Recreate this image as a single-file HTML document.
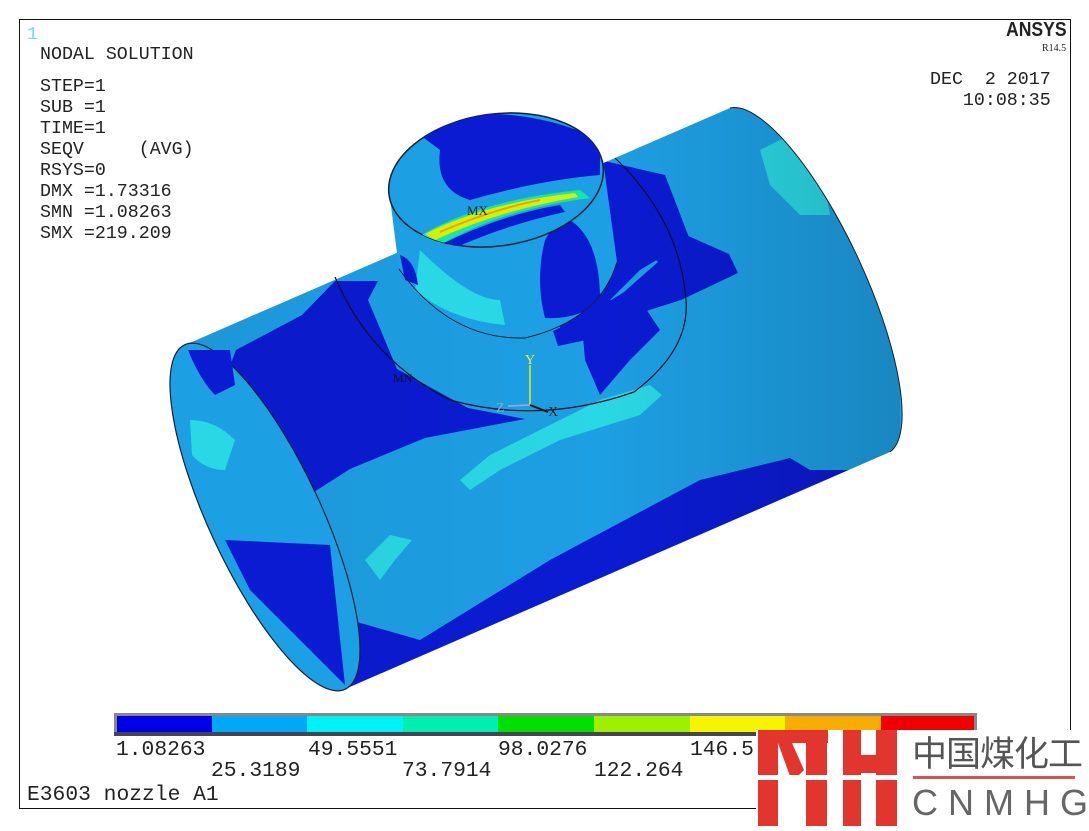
<!DOCTYPE html>
<html><head><meta charset="utf-8"><style>
html,body{margin:0;padding:0;background:#fff;}
body{width:1089px;height:831px;position:relative;overflow:hidden;font-family:"Liberation Mono",monospace;}
.frame{position:absolute;left:19px;top:19px;width:1052px;height:790px;border:1px solid #111;box-sizing:border-box;}
.t{position:absolute;font-size:18.3px;color:#222;white-space:pre;line-height:21px;}
.b{font-size:21.3px;}
</style></head><body>
<div class="frame"></div>
<svg width="1089" height="831" style="position:absolute;left:0;top:0">
<defs>
<linearGradient id="sh" x1="0" y1="0" x2="1" y2="0">
<stop offset="0" stop-color="#000" stop-opacity="0.05"/>
<stop offset="0.6" stop-color="#000" stop-opacity="0"/>
<stop offset="1" stop-color="#000" stop-opacity="0.15"/>
</linearGradient>
<clipPath id="body"><path d="M185,345 L730,108 A190,56 65 0 1 890,452 L345,689 Z"/></clipPath>
<clipPath id="noz"><ellipse cx="496" cy="180" rx="108" ry="66" transform="rotate(-8 496 180)"/></clipPath>
</defs>
<path d="M185,345 L730,108 A190,56 65 0 1 890,452 L345,689 Z" fill="#1d9fe3"/>
<g clip-path="url(#body)">
<polygon points="236,350 302,315 335,281 378,281 368,300 397,369 468,408 525,419 425,438 350,469 278,515 222,562 180,500" fill="#0b1bd2"/>
<polygon points="200,540 300,560 340,600 420,640 550,560 700,480 790,458 810,470 860,470 900,700 200,700" fill="#0b1bd2"/>
<polygon points="340,560 420,640 350,620" fill="#1d9fe3"/>
<polygon points="634,215 686,235 729,254 738,273 681,300 634,315 596,338 558,346 553,331 587,315 624,292 658,262 634,235" fill="#0b1bd2"/>
<polygon points="600,160 665,175 690,240 640,270 610,300 590,330 560,335 560,260" fill="#0b1bd2"/>
<polygon points="580,300 640,300 660,330 630,360 600,395 585,360" fill="#0b1bd2"/>
<polygon points="460,480 490,455 540,430 600,400 650,385 662,395 640,415 560,440 500,470 470,490" fill="#2ad7e4"/>
<polygon points="760,150 790,135 820,160 830,215 800,215 770,185" fill="#2ad7e4"/>
<polygon points="365,560 390,535 412,540 395,560 380,580" fill="#2ad7e4"/>
<rect x="160" y="90" width="740" height="620" fill="url(#sh)"/>
</g>
<path d="M730,108 A190,56 65 0 1 890,452" fill="none" stroke="#123" stroke-width="1"/>
<ellipse cx="265" cy="517" rx="190" ry="56" transform="rotate(65 265 517)" fill="#1d9fe3" stroke="#123" stroke-width="1.2"/>
<path d="M188,350 Q200,380 215,395 L235,385 L230,350 Z" fill="#0b1bd2"/>
<path d="M190,420 Q215,420 235,440 L225,470 Q205,470 192,455 Z" fill="#2ad7e4"/>
<path d="M225,540 L330,545 L345,685 Q300,640 250,590 Z" fill="#0b1bd2"/>
<path d="M335,277 Q370,360 450,400 Q540,425 634,392 Q690,350 686,300 Q680,220 615,158" fill="none" stroke="#112" stroke-width="1.2"/>
<path d="M389,190 L399,269 Q450,340 525,338 Q600,320 617,262 L603,160 Z" fill="#1d9fe3"/>
<path d="M560,215 Q600,230 600,300 Q580,320 545,318 Q535,280 545,240 Z" fill="#0b1bd2"/>
<path d="M420,250 Q470,300 500,300 L505,325 Q450,320 415,290 Z" fill="#2ad7e4"/>
<path d="M400,255 Q415,260 418,285 L405,280 Z" fill="#0b1bd2"/>
<path d="M399,269 Q450,340 525,338 Q600,320 617,262" fill="none" stroke="#123" stroke-width="1"/>
<ellipse cx="496" cy="180" rx="108" ry="66" transform="rotate(-8 496 180)" fill="#1d9fe3" stroke="#123" stroke-width="1.5"/>
<g clip-path="url(#noz)">
<path d="M400,120 Q520,100 600,140 L600,175 Q540,180 470,200 Q435,190 440,150 Z" fill="#0b1bd2"/>
<path d="M420,236 Q480,200 580,190 L590,198 Q500,210 440,245 Z" fill="#18e6a8"/>
<path d="M425,234 Q485,203 575,193 L578,197 Q500,210 435,240 Z" fill="#d8f000"/>
<path d="M440,232 Q490,210 540,200" stroke="#f2a000" stroke-width="2" fill="none"/>
<path d="M440,245 Q500,215 560,205 L565,212 Q505,225 450,250 Z" fill="#0b1bd2"/>
</g>
<text x="467" y="215" font-family="Liberation Serif,serif" font-size="13" fill="#222">MX</text>
<text x="393" y="382" font-family="Liberation Serif,serif" font-size="12" fill="#112">MN</text>
<line x1="530" y1="405" x2="530" y2="365" stroke="#ee0" stroke-width="1.5"/>
<line x1="530" y1="405" x2="548" y2="412" stroke="#111" stroke-width="2"/>
<line x1="530" y1="405" x2="508" y2="406" stroke="#9ad" stroke-width="1.5"/>
<text x="525" y="364" font-family="Liberation Serif,serif" font-size="14" fill="#ee4">Y</text>
<text x="548" y="416" font-family="Liberation Serif,serif" font-size="14" fill="#222">X</text>
<text x="496" y="412" font-family="Liberation Serif,serif" font-size="14" fill="#8ac">Z</text>
<rect x="114" y="713" width="863" height="23" fill="#888"/>
<rect x="117" y="716" width="95" height="16" fill="#0000e8"/>
<rect x="212" y="716" width="95" height="16" fill="#00a8f5"/>
<rect x="307" y="716" width="96" height="16" fill="#00f2f5"/>
<rect x="403" y="716" width="95" height="16" fill="#00eeb0"/>
<rect x="498" y="716" width="96" height="16" fill="#00e000"/>
<rect x="594" y="716" width="96" height="16" fill="#9ef000"/>
<rect x="690" y="716" width="95" height="16" fill="#f5f500"/>
<rect x="785" y="716" width="96" height="16" fill="#f8ae00"/>
<rect x="881" y="716" width="93" height="16" fill="#f00000"/>
<rect x="114" y="732" width="863" height="4" fill="#445"/>
</svg>
<div class="t" style="left:27px;top:25px;color:#7dd">1</div>
<div class="t" style="left:40px;top:45px">NODAL SOLUTION</div>
<div class="t" style="left:40px;top:77px">STEP=1
SUB =1
TIME=1
SEQV     (AVG)
RSYS=0
DMX =1.73316
SMN =1.08263
SMX =219.209</div>
<div class="t" style="left:1006px;top:20px;font-family:'Liberation Sans',sans-serif;font-weight:bold;font-size:20px;transform:scaleX(0.88);transform-origin:left">ANSYS</div>
<div class="t" style="left:1042px;top:38px;font-family:'Liberation Serif',serif;font-size:10px">R14.5</div>
<div class="t" style="left:930px;top:70px">DEC  2 2017
   10:08:35</div>
<div class="t b" style="left:116px;top:740px">1.08263</div>
<div class="t b" style="left:211px;top:761px">25.3189</div>
<div class="t b" style="left:308px;top:740px">49.5551</div>
<div class="t b" style="left:402px;top:761px">73.7914</div>
<div class="t b" style="left:498px;top:740px">98.0276</div>
<div class="t b" style="left:594px;top:761px">122.264</div>
<div class="t b" style="left:690px;top:740px">146.5</div>
<div class="t b" style="left:27px;top:785px">E3603 nozzle A1</div>
<div style="position:absolute;left:756px;top:730px;width:333px;height:101px;background:#fff"></div>
<svg width="1089" height="831" style="position:absolute;left:0;top:0">
<g fill="#e2352d">
<rect x="758" y="730" width="20" height="96"/>
<rect x="758" y="730" width="70" height="13"/>
<polygon points="778,743 792,743 804,770 798,776 790,776"/>
<rect x="806" y="730" width="21" height="96"/>
<rect x="843" y="730" width="18" height="96"/>
<rect x="876" y="730" width="21" height="96"/>
<rect x="861" y="755" width="15" height="18"/>
</g>
<rect x="756" y="775" width="145" height="5" fill="#fff"/>
<rect x="913" y="776" width="162" height="3" fill="#d9534f"/>
</svg>
<div style="position:absolute;left:912px;top:728px;font-family:'Noto Sans CJK SC',sans-serif;font-size:35px;color:#555;line-height:48px;white-space:nowrap;letter-spacing:-1px">中国煤化工</div>
<div style="position:absolute;left:912px;top:782px;font-family:'Liberation Sans',sans-serif;font-size:36px;color:#666;line-height:42px;letter-spacing:10px;white-space:nowrap">CNMHG</div>
</body></html>
